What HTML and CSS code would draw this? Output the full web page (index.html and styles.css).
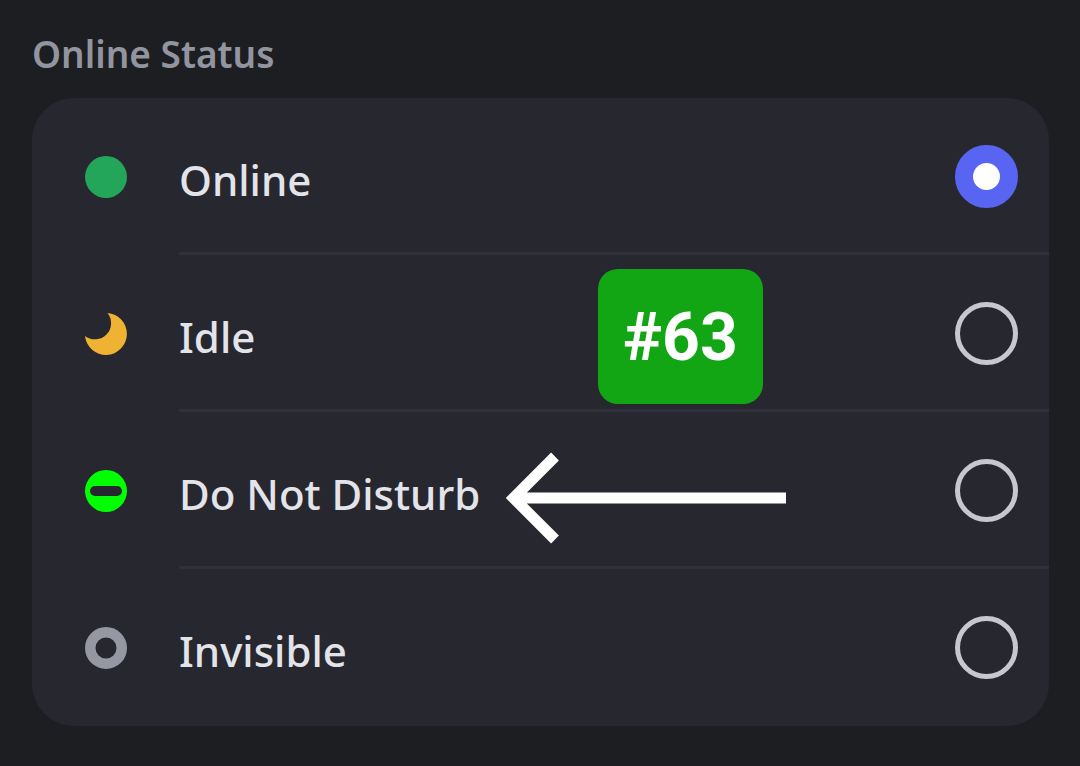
FILE: index.html
```html
<!DOCTYPE html>
<html lang="en">
<head>
<meta charset="utf-8">
<meta name="viewport" content="width=device-width, initial-scale=1">
<title>Online Status</title>
<link rel="stylesheet" href="styles.css">
</head>
<body>
<main class="page">
  <h1 class="title" id="status-title">Online Status</h1>
  <div class="card" role="radiogroup" aria-labelledby="status-title">
    <label class="row">
      <svg class="icon" viewBox="0 0 42 42" aria-hidden="true"><circle cx="21" cy="21" r="21" fill="#24a65a"/></svg>
      <span class="body"><span class="name">Online</span><input class="radio" type="radio" name="status" checked></span>
    </label>
    <label class="row">
      <svg class="icon" viewBox="0 0 42 42" aria-hidden="true"><path d="M22.500 0A21 21 0 1 1 0 23A16.200 16.200 0 0 0 22.500 0Z" fill="#f0b232"/></svg>
      <span class="body"><span class="name">Idle</span><input class="radio" type="radio" name="status"></span>
    </label>
    <label class="row">
      <svg class="icon" viewBox="0 0 42 42" aria-hidden="true"><circle cx="21" cy="21" r="21" fill="#00ff00"/><rect x="5" y="16" width="32" height="10" rx="5" fill="#272730"/></svg>
      <span class="body"><span class="name">Do Not Disturb</span><input class="radio" type="radio" name="status"></span>
    </label>
    <label class="row">
      <svg class="icon" viewBox="0 0 42 42" aria-hidden="true"><circle cx="21" cy="21" r="15.750" fill="none" stroke="#9597a3" stroke-width="10.500"/></svg>
      <span class="body"><span class="name">Invisible</span><input class="radio" type="radio" name="status"></span>
    </label>
    <div class="badge">#63</div>
    <svg class="arrow" viewBox="0 0 280 92" aria-hidden="true"><path d="M280 46H8M49 4.500L7.500 46L49 87.500" fill="none" stroke="#fff" stroke-width="11"/></svg>
  </div>
</main>
</body>
</html>
```
FILE: styles.css
```css
* { box-sizing: border-box; }

body {
  margin: 0;
  background: #1d1e22;
  font-family: "Noto Sans", "Open Sans", sans-serif;
}

.page { padding: 28px 31px 40px 32px; }

.title {
  margin: 0 0 18px;
  color: #92959f;
  font-size: 37px;
  font-weight: 600;
  line-height: 52px;
}

.card {
  position: relative;
  overflow: hidden;
  border-radius: 42px;
  background: #272730;
}

.row {
  display: flex;
  align-items: stretch;
  gap: 52px;
  min-height: 157px;
  padding-left: 53px;
  cursor: pointer;
}

.icon {
  flex: none;
  align-self: center;
  width: 42px;
  height: 42px;
}

.body {
  display: flex;
  flex: 1;
  align-items: center;
  justify-content: space-between;
  padding-right: 31px;
  border-block: 3px solid transparent;
  border-bottom-color: #30313a;
}

.row:nth-child(4) .body { border-bottom-color: transparent; }

.name {
  padding-top: 6px;
  color: #e3e4e9;
  font-size: 42px;
  font-weight: 500;
  line-height: 60px;
}

.radio {
  appearance: none;
  flex: none;
  width: 63px;
  height: 63px;
  margin: 0;
  border: 5px solid #c7c8ce;
  border-radius: 50%;
}

.radio:checked {
  border: 18px solid #5865f2;
  background: #fff;
}

.badge {
  position: absolute;
  top: 171px;
  left: 566px;
  padding: 29px 25px 26px;
  border-radius: 20px;
  background: #12a614;
  color: #fff;
  font-family: Roboto, sans-serif;
  font-size: 66px;
  font-weight: 700;
  line-height: 80px;
}

.arrow {
  position: absolute;
  top: 354px;
  left: 474px;
  width: 280px;
  height: 92px;
}
```
